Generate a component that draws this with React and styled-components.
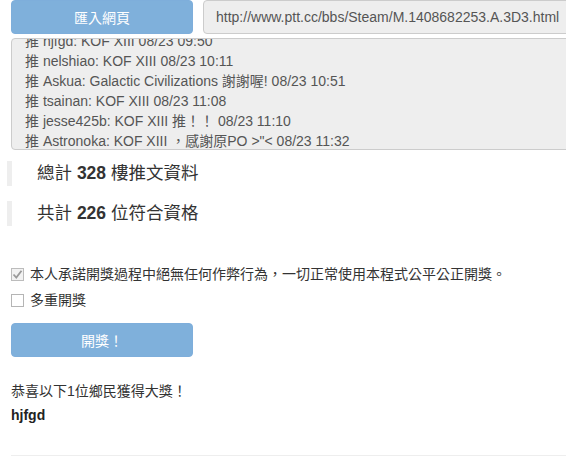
import { useEffect, useRef } from 'react';
import styled, { createGlobalStyle } from 'styled-components';

const comments = [
  '推 hjfgd: KOF XIII 08/23 09:50',
  '推 nelshiao: KOF XIII 08/23 10:11',
  '推 Askua: Galactic Civilizations 謝謝喔! 08/23 10:51',
  '推 tsainan: KOF XIII 08/23 11:08',
  '推 jesse425b: KOF XIII 推！！ 08/23 11:10',
  '推 Astronoka: KOF XIII ，感謝原PO >"< 08/23 11:32',
];

function App() {
  const boxRef = useRef(null);

  useEffect(() => {
    // the comment list is scrolled a little, as in a textarea
    if (boxRef.current) boxRef.current.scrollTop = 14;
  }, []);

  return (
    <>
      <GlobalStyle />
      <Page>
        <TopRow>
          <Button disabled>匯入網頁</Button>
          <UrlInput disabled value="http://www.ptt.cc/bbs/Steam/M.1408682253.A.3D3.html" readOnly />
        </TopRow>
        <CommentBox ref={boxRef}>
          {comments.map((c) => (
            <Line key={c}>{c}</Line>
          ))}
        </CommentBox>
        <Stats>
          <Quote>
            總計 <b>328</b> 樓推文資料
          </Quote>
          <Quote>
            共計 <b>226</b> 位符合資格
          </Quote>
        </Stats>
        <Options>
          <Option>
            <Check checked>
              <svg width="11" height="11" viewBox="0 0 11 11">
                <path d="M1.5 5.5 L4.3 8.5 L9.5 1.8" fill="none" stroke="#9a9a9a" strokeWidth="1.8" />
              </svg>
            </Check>
            本人承諾開獎過程中絕無任何作弊行為，一切正常使用本程式公平公正開獎。
          </Option>
          <Option>
            <Check />
            多重開獎
          </Option>
        </Options>
        <Button disabled>開獎！</Button>
        <Result>
          <p>恭喜以下1位鄉民獲得大獎！</p>
          <Winner>hjfgd</Winner>
        </Result>
        <Rule />
      </Page>
    </>
  );
}

export default App;

const GlobalStyle = createGlobalStyle`
  body {
    margin: 0;
    overflow: hidden;
    background: #fff;
    color: #333;
    font-family: "Liberation Sans", Arial, "Noto Sans CJK TC", sans-serif;
    font-size: 14px;
    line-height: 20px;
  }
  * { box-sizing: border-box; }
`;

const Page = styled.div`
  padding-left: 11px;
  width: 700px;
`;

const TopRow = styled.div`
  display: flex;
  gap: 10px;
  height: 34px;
`;

const Button = styled.button`
  width: 182px;
  height: 34px;
  flex-shrink: 0;
  border: 1px solid #7eaedb;
  border-radius: 4px;
  background: #7fb0db;
  color: #fff;
  font-family: inherit;
  font-size: 14px;
  padding: 0;
`;

const UrlInput = styled.input`
  flex: 1;
  height: 34px;
  border: 1px solid #ccc;
  border-radius: 4px;
  background: #eee;
  color: #555;
  font-family: inherit;
  font-size: 14px;
  padding: 6px 12px;
  outline: none;
`;

const CommentBox = styled.div`
  margin-top: 4px;
  height: 112px;
  overflow: hidden;
  border: 1px solid #ccc;
  border-radius: 4px;
  background: #eee;
  color: #555;
  padding: 6px 13px;
`;

const Line = styled.div`
  white-space: nowrap;
  line-height: 20px;
`;

const Stats = styled.div`
  margin: 11px 0 0 -4px;
  display: flex;
  flex-direction: column;
  gap: 15px;
`;

const Quote = styled.div`
  border-left: 5px solid #eee;
  padding-left: 25px;
  font-size: 17.5px;
  line-height: 25px;
  color: #333;

  b {
    font-weight: bold;
  }
`;

const Options = styled.div`
  margin-top: 38px;
  display: flex;
  flex-direction: column;
  gap: 6px;
  margin-bottom: 13px;
`;

const Option = styled.label`
  display: flex;
  align-items: center;
  gap: 6px;
  height: 20px;
  color: #333;
`;

const Check = styled.span`
  width: 13px;
  height: 13px;
  border: 1px solid ${(p) => (p.checked ? '#bcbcbc' : '#b5b5b5')};
  background: ${(p) => (p.checked ? '#f2f2f2' : '#fff')};
  display: inline-flex;
  align-items: center;
  justify-content: center;
`;

const Result = styled.div`
  margin-top: 24px;

  p {
    margin: 0;
  }
`;

const Winner = styled.div`
  font-weight: bold;
  margin-top: 4px;
  color: #222;
`;

const Rule = styled.hr`
  margin: 30px 0 0;
  border: 0;
  border-top: 1px solid #eee;
`;
